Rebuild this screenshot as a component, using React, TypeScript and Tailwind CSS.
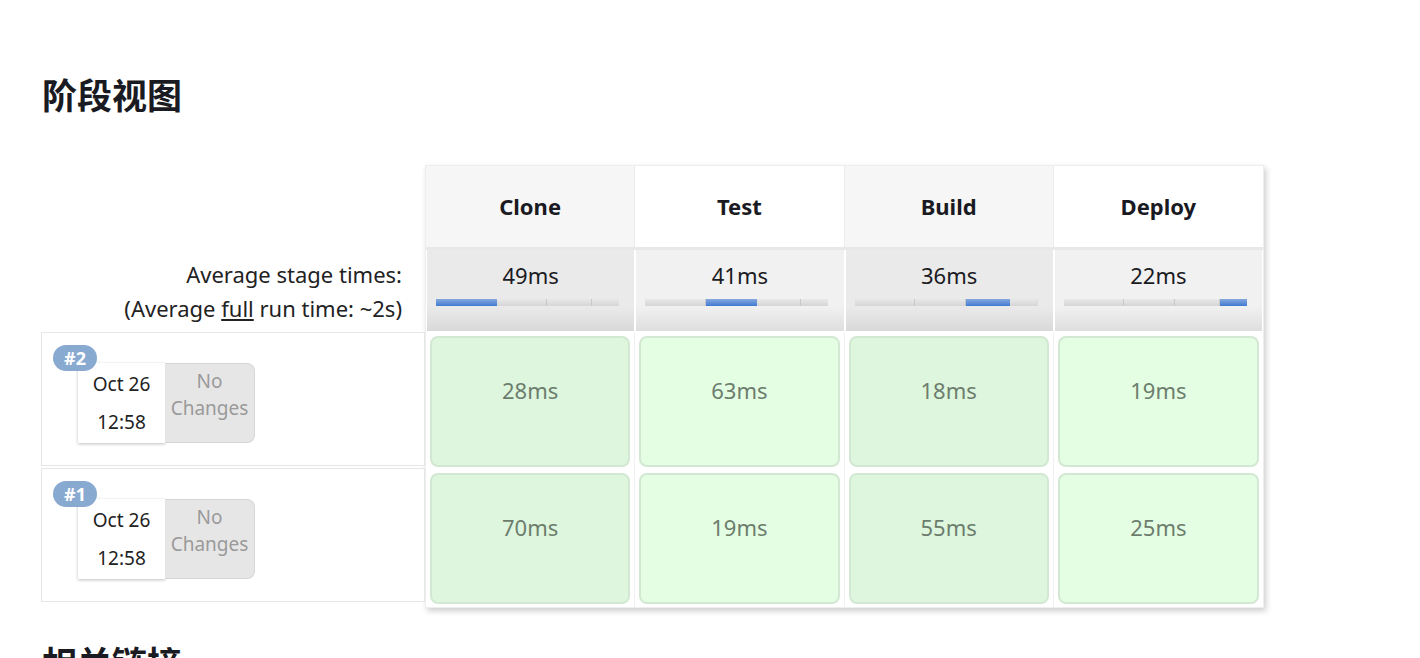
const stages = [
  { name: 'Clone', avg: 49 },
  { name: 'Test', avg: 41 },
  { name: 'Build', avg: 36 },
  { name: 'Deploy', avg: 22 },
];

const runs = [
  { id: 2, date: 'Oct 26', time: '12:58', times: [28, 63, 18, 19] },
  { id: 1, date: 'Oct 26', time: '12:58', times: [70, 19, 55, 25] },
];

const total = stages.reduce((s, x) => s + x.avg, 0);

function Bar({ active }: { active: number }) {
  return (
    <div className="ml-[9px] flex h-[7px] w-[183px] bg-[#dcdcdc]">
      {stages.map((s, i) => (
        <div
          key={s.name}
          style={{ width: `${(s.avg / total) * 100}%` }}
          className={
            i === active
              ? 'h-full bg-gradient-to-b from-[#86a9e0] to-[#3f7ad0]'
              : 'h-full border-r border-[#c8c8c8] bg-gradient-to-b from-[#e8e8e8] to-[#d6d6d6] last:border-r-0'
          }
        />
      ))}
    </div>
  );
}

function RunInfo({ id, date, time }: { id: number; date: string; time: string }) {
  return (
    <div className="relative h-[134px] border border-[#e6e6e6] bg-white">
      <span className="absolute left-[11px] top-[12px] z-10 rounded-full bg-[#88aad1] px-[11px] text-[18px] font-bold leading-[26px] text-white">
        #{id}
      </span>
      <div className="ml-[36px] mt-[30px] flex h-[80px]">
        <div className="flex w-[87px] flex-col items-center justify-center gap-[18px] bg-white text-[19px] leading-[20px] text-[#222] shadow-[0_1px_3px_rgba(0,0,0,0.25)]">
          <span>{date}</span>
          <span>{time}</span>
        </div>
        <div className="flex w-[90px] flex-col items-center rounded-r-lg border border-l-0 border-[#d6d6d6] bg-[#e6e6e6] pt-[4px] text-[19px] leading-[27px] text-[#9a9a9a]">
          <span>No</span>
          <span>Changes</span>
        </div>
      </div>
    </div>
  );
}

export default function App() {
  return (
    <div className="min-h-[658px] overflow-hidden bg-white pl-[41px] font-['Noto_Sans','Noto_Sans_CJK_SC',sans-serif] text-[#1a1a22]">
      <h2 className="pt-[70px] pl-[1px] text-[35px] font-bold leading-[52px]">阶段视图</h2>

      <div className="mt-[43px] flex">
        <div className="w-[384px]">
          <div className="h-[84px]" />
          <div className="flex h-[83px] flex-col items-end justify-center pr-[23px] text-[22px] leading-[34px] text-[#222]">
            <span>Average stage times:</span>
            <span>
              (Average <span className="underline">full</span> run time: ~2s)
            </span>
          </div>
          <div className="flex flex-col gap-[2px]">
            {runs.map((r) => (
              <RunInfo key={r.id} id={r.id} date={r.date} time={r.time} />
            ))}
          </div>
        </div>

        <div className="w-[839px] border border-[#eeeeee] bg-white shadow-[2px_3px_6px_rgba(0,0,0,0.2)]">
          <div className="grid h-[84px] grid-cols-4 border-b-[3px] border-[#e8e8e8]">
            {stages.map((s, i) => (
              <div
                key={s.name}
                className={`flex items-center justify-center border-r border-[#ececec] text-[22px] font-bold last:border-r-0 ${
                  i % 2 === 0 ? 'bg-[#f6f6f6]' : 'bg-white'
                }`}
              >
                {s.name}
              </div>
            ))}
          </div>
          <div className="grid h-[83px] grid-cols-4">
            {stages.map((s, i) => (
              <div
                key={s.name}
                className={`border-x border-b-2 border-white pt-[10px] ${
                  i % 2 === 0
                    ? 'bg-gradient-to-b from-[#eaeaea] from-70% to-[#d9d9d9]'
                    : 'bg-gradient-to-b from-[#f1f1f1] from-70% to-[#dedede]'
                }`}
              >
                <div className="text-center text-[22px] leading-[30px]">{s.avg}ms</div>
                <div className="mt-[9px]">
                  <Bar active={i} />
                </div>
              </div>
            ))}
          </div>
          {runs.map((r) => (
            <div key={r.id} className="grid h-[137px] grid-cols-4">
              {r.times.map((t, i) => (
                <div key={i} className="border-r border-[#f0f0f0] px-[4px] py-[3px] last:border-r-0">
                  <div
                    className={`flex h-full items-center justify-center rounded-lg border-2 border-[#d3e8d3] pb-[22px] text-[22px] text-[#6d7d6d] ${
                      i % 2 === 0 ? 'bg-[#ddf6dd]' : 'bg-[#e4fee4]'
                    }`}
                  >
                    {t}ms
                  </div>
                </div>
              ))}
            </div>
          ))}
        </div>
      </div>

      <h2 className="mt-[30px] pl-[1px] text-[35px] font-bold leading-[52px]">相关链接</h2>
    </div>
  );
}
